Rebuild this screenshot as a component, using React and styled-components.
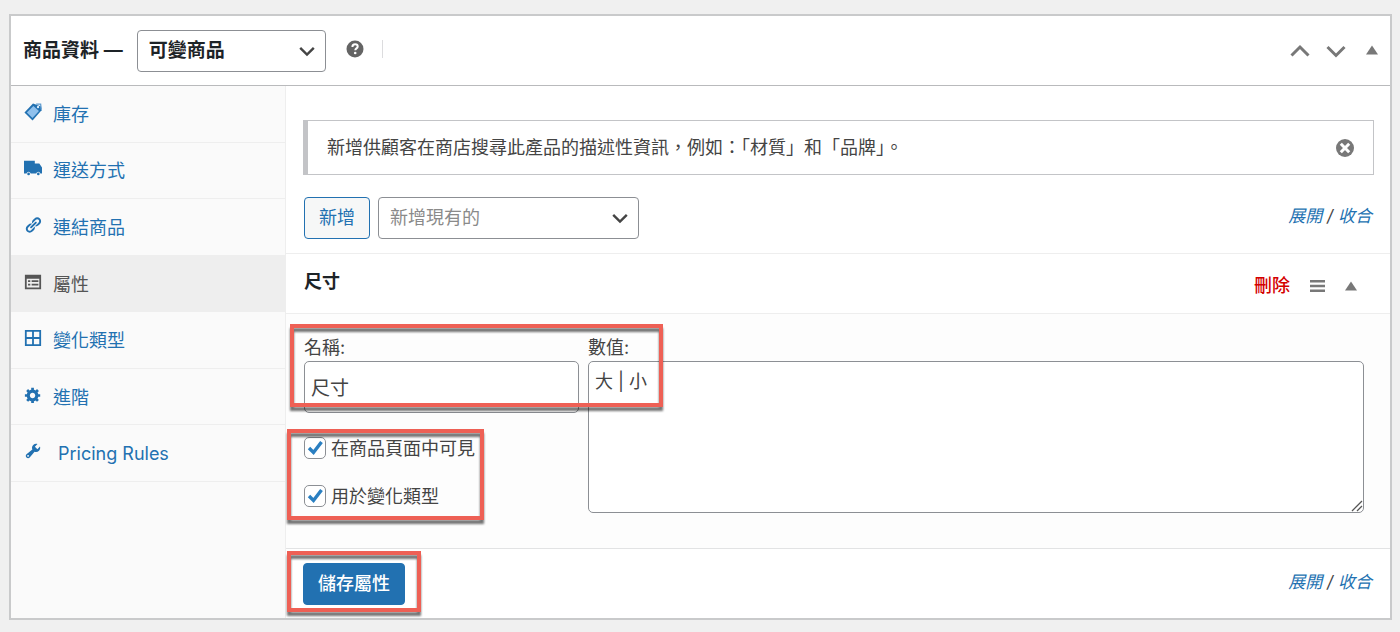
import React from "react";
import styled, { createGlobalStyle } from "styled-components";

const tabs = [
    { id: "inventory", label: "庫存" },
    { id: "shipping", label: "運送方式" },
    { id: "linked", label: "連結商品" },
    { id: "attributes", label: "屬性" },
    { id: "variations", label: "變化類型" },
    { id: "advanced", label: "進階" },
    { id: "pricing", label: "Pricing Rules", indent: true },
];

const TabIcon = ({ id }) => (
    <svg width="18" height="18" viewBox="0 0 20 20" fill="currentColor" aria-hidden="true">
        {id === "inventory" && <>
            <path d="M0.5 10.5 10 0.5 19 4 19.5 8 9.5 19.5z" />
            <path d="M3.2 10.6 10.4 3.2l6.2 5.6L9.4 16.6z" fill="#8fc0ec" />
            <path d="M13.5 1.2h5l.6 6" fill="none" stroke="#5d9bd0" strokeWidth="1.4" />
            <circle cx="15.6" cy="4.4" r="1.3" fill="#d8eafa" />
        </>}
        {id === "shipping" && <>
            <path d="M0 2h12v3h5l3 4.5V16h-1.8a2.4 2.4 0 0 0-4.6 0H7.4a2.4 2.4 0 0 0-4.6 0H0z" />
            <circle cx="5.1" cy="16.6" r="1.5" />
            <circle cx="15.9" cy="16.6" r="1.5" />
        </>}
        {id === "linked" &&
            <path d="M17.74 2.76c1.68 1.69 1.68 4.41 0 6.1l-1.53 1.52c-1.12 1.12-2.7 1.47-4.14 1.09l2.62-2.61.76-.77.76-.76c.84-.84.84-2.2 0-3.04-.84-.85-2.2-.85-3.04 0l-.77.76-3.38 3.38c-.37-1.44-.02-3.02 1.1-4.14l1.52-1.53c1.69-1.68 4.42-1.68 6.1 0zM8.59 13.43l5.34-5.34c.42-.42.42-1.1 0-1.52-.44-.43-1.13-.39-1.53 0l-5.33 5.34c-.42.42-.42 1.1 0 1.52.44.43 1.13.39 1.52 0zm-.76 2.29l4.14-4.15c.38 1.44.03 3.02-1.09 4.14l-1.52 1.53c-1.69 1.68-4.41 1.68-6.1 0-1.68-1.68-1.68-4.42 0-6.1l1.53-1.52c1.12-1.12 2.7-1.47 4.14-1.1l-4.14 4.15c-.85.84-.85 2.2 0 3.05.84.84 2.2.84 3.04 0z" />
        }
        {id === "attributes" &&
            <path fillRule="evenodd" d="M1 2h18v16H1zM3 6.5v9.5h14V6.5zM4.5 8h2.5v2H4.5zM8.5 8H16v2H8.5zM4.5 12h2.5v2H4.5zM8.5 12H16v2H8.5z" />
        }
        {id === "variations" &&
            <path fillRule="evenodd" d="M1 1h18v18H1zM3 3v6h6V3zM11 3v6h6V3zM3 11v6h6v-6zM11 11v6h6v-6z" />
        }
        {id === "advanced" &&
            <path d="M18 12h-2.18c-.17.7-.44 1.35-.81 1.93l1.54 1.54-2.1 2.1-1.54-1.54c-.58.36-1.23.63-1.91.79V19H8v-2.18c-.68-.16-1.33-.43-1.91-.79l-1.54 1.54-2.12-2.12 1.54-1.54c-.36-.58-.63-1.23-.79-1.91H1V9.03h2.17c.16-.7.44-1.35.8-1.94L2.43 5.55l2.1-2.1 1.54 1.54c.58-.37 1.24-.64 1.93-.81V2h3v2.18c.68.16 1.33.43 1.91.79l1.54-1.54 2.12 2.12-1.54 1.54c.36.59.64 1.24.8 1.94H18V12zm-8.5 1.5c1.66 0 3-1.34 3-3s-1.34-3-3-3-3 1.34-3 3 1.34 3 3 3z" />
        }
        {id === "pricing" &&
            <path d="M16.68 9.77c-1.34 1.34-3.3 1.67-4.95.99l-5.41 6.52c-.99.99-2.59.99-3.58 0s-.99-2.59 0-3.57l6.52-5.42c-.68-1.65-.35-3.61.99-4.95 1.28-1.28 3.12-1.62 4.72-1.06l-2.89 2.89 2.82 2.82 2.86-2.87c.53 1.58.18 3.39-1.08 4.65zM3.81 16.21c.4.39 1.04.39 1.43 0 .4-.4.4-1.04 0-1.43-.39-.4-1.03-.4-1.43 0-.39.39-.39 1.03 0 1.43z" />
        }
    </svg>
);

const Chevron = ({ up, size = 20, weight = 3 }) => (
    <svg width={size} height={size} viewBox="0 0 20 20" fill="none" stroke="currentColor" strokeWidth={weight} aria-hidden="true">
        <path d={up ? "M1.5 14.5 10 6l8.5 8.5" : "M1.5 6 10 14.5 18.5 6"} />
    </svg>
);

const Triangle = () => (
    <svg width="12" height="10" viewBox="0 0 12 10" fill="currentColor" aria-hidden="true">
        <path d="M6 0.5 12 9.5H0z" />
    </svg>
);

const Select = ({ label, options, $width, $title, $muted }) => (
    <SelectWrap $width={$width}>
        <SelectBox aria-label={label} $title={$title} $muted={$muted}>
            {options.map(o => <option key={o}>{o}</option>)}
        </SelectBox>
        <Chevron size={16} />
    </SelectWrap>
);

const Toggles = () => (
    <ToggleLinks>
        <a href="#expand">展開</a> / <a href="#close">收合</a>
    </ToggleLinks>
);

const Check = ({ id, label }) => (
    <CheckRow>
        <CheckMark>
            <input type="checkbox" id={id} defaultChecked />
            <svg width="20" height="20" viewBox="0 0 20 20" fill="none" stroke="#2a7fc1" strokeWidth="3.4" aria-hidden="true">
                <path d="M4 10 8.5 14.5 16.5 4" />
            </svg>
        </CheckMark>
        <label htmlFor={id}>{label}</label>
    </CheckRow>
);

const App = () => {
    return <>
        <GlobalStyle />
        <Page lang="zh-TW">
            <Panel>
                <PanelHeader>
                    <h2>商品資料 —</h2>
                    <Select label="商品類型" options={["可變商品"]} $width={189} $title />
                    <HelpTip>
                        <svg width="18" height="18" viewBox="0 0 18 18" aria-label="說明">
                            <circle cx="9" cy="9" r="8.5" fill="#646464" />
                            <path d="M6.4 6.9C6.4 5.2 7.5 4.3 9.1 4.3s2.6.9 2.6 2.2c0 1.9-2.4 1.9-2.4 3.8" fill="none" stroke="#fff" strokeWidth="2" />
                            <circle cx="9.2" cy="13" r="1.3" fill="#fff" />
                        </svg>
                    </HelpTip>
                    <HandleActions>
                        <IconButton aria-label="上移"><Chevron up /></IconButton>
                        <IconButton aria-label="下移"><Chevron /></IconButton>
                        <ToggleButton aria-label="切換面板"><Triangle /></ToggleButton>
                    </HandleActions>
                </PanelHeader>

                <PanelBody>
                    <Sidebar>
                        <ul>
                            {tabs.map(tab => (
                                <TabItem key={tab.id} $active={tab.id === "attributes"} $indent={tab.indent}>
                                    <a href={`#${tab.id}`}>
                                        <TabIcon id={tab.id} />
                                        <span>{tab.label}</span>
                                    </a>
                                </TabItem>
                            ))}
                        </ul>
                    </Sidebar>

                    <Content>
                        <Notice>
                            <p>新增供顧客在商店搜尋此產品的描述性資訊，例如：「材質」和「品牌」。</p>
                            <IconButton aria-label="關閉">
                                <svg width="18" height="18" viewBox="0 0 18 18">
                                    <circle cx="9" cy="9" r="9" fill="#787878" />
                                    <path d="M4.8 4.8l8.4 8.4M13.2 4.8l-8.4 8.4" stroke="#fff" strokeWidth="3" />
                                </svg>
                            </IconButton>
                        </Notice>

                        <Toolbar>
                            <Button>新增</Button>
                            <Select label="新增現有的屬性" options={["新增現有的"]} $width={261} $muted />
                            <Toggles />
                        </Toolbar>

                        <AttributeHeader>
                            <h3>尺寸</h3>
                            <DeleteLink href="#delete">刪除</DeleteLink>
                            <svg width="15" height="12" viewBox="0 0 15 12" fill="#787878" aria-hidden="true">
                                <path d="M0 0h15v2.4H0zM0 4.8h15v2.4H0zM0 9.6h15V12H0z" />
                            </svg>
                            <IconButton aria-label="收合屬性"><Triangle /></IconButton>
                        </AttributeHeader>

                        <AttributeForm>
                            <FieldHighlight />
                            <div>
                                <Field>
                                    <label htmlFor="attribute-name">名稱:</label>
                                    <input id="attribute-name" type="text" defaultValue="尺寸" />
                                </Field>
                                <CheckGroup>
                                    <Check id="attribute-visible" label="在商品頁面中可見" />
                                    <Check id="attribute-variation" label="用於變化類型" />
                                    <CheckHighlight />
                                </CheckGroup>
                            </div>
                            <Field>
                                <label htmlFor="attribute-values">數值:</label>
                                <TextAreaWrap>
                                    <textarea id="attribute-values" defaultValue="大 | 小" />
                                    <svg width="12" height="12" viewBox="0 0 12 12" stroke="#555" strokeWidth="1.3" aria-hidden="true">
                                        <path d="M1 11 11 1M6 11l5-5" />
                                    </svg>
                                </TextAreaWrap>
                            </Field>
                        </AttributeForm>

                        <Footer>
                            <SaveWrap>
                                <Button $primary>儲存屬性</Button>
                                <SaveHighlight />
                            </SaveWrap>
                            <Toggles />
                        </Footer>
                    </Content>
                </PanelBody>
            </Panel>
        </Page>
    </>
};

const GlobalStyle = createGlobalStyle`
    *, *::before, *::after {
        box-sizing: border-box;
    }
    body {
        margin: 0;
        background: #f0f0f0;
        color: #444;
        font-family: Inter, "Noto Sans CJK TC", sans-serif;
        font-size: 18px;
        line-height: 26px;
    }
    h2, h3, p, ul {
        margin: 0;
        padding: 0;
    }
    button, input, select, textarea {
        font: inherit;
        color: inherit;
    }
    svg {
        display: block;
        flex: none;
    }
`

const Page = styled.div`
    padding: 14px 8px 12px 9px;
`

const Panel = styled.section`
    background: #fff;
    border: 2px solid #c9cacb;
`

const PanelHeader = styled.header`
    display: flex;
    align-items: center;
    height: 70px;
    padding: 0 12px;
    border-bottom: 1px solid #b9babc;

    h2 {
        margin-right: 14px;
        color: #1d2327;
        font-size: 19px;
        font-weight: 600;
    }
`

const SelectWrap = styled.div`
    position: relative;
    width: ${props => props.$width}px;
    height: 42px;

    svg {
        position: absolute;
        top: 13px;
        right: 11px;
        color: #444;
        pointer-events: none;
    }
`

const SelectBox = styled.select`
    appearance: none;
    width: 100%;
    height: 100%;
    padding: 0 30px 0 11px;
    border: 1px solid #8c8f94;
    border-radius: 4px;
    background: #fff;
    color: ${props => props.$muted ? "#8a8a8a" : "#1d2327"};
    font-size: ${props => props.$title ? 19 : 18}px;
    font-weight: ${props => props.$title ? 600 : 400};
`

const HelpTip = styled.span`
    margin: 0 0 3px 20px;
    padding-right: 18px;
    border-right: 1px solid #dcdcde;
`

const HandleActions = styled.div`
    display: flex;
    align-items: center;
    gap: 16px;
    margin-left: auto;
`

const IconButton = styled.button`
    display: flex;
    padding: 0;
    border: 0;
    background: none;
    color: #787878;
    cursor: pointer;
`

const ToggleButton = styled(IconButton)`
    padding: 0 0 2px 4px;
`

const PanelBody = styled.div`
    display: flex;
`

const Sidebar = styled.nav`
    flex: none;
    width: 275px;
    background: #fafafa;
    border-right: 1px solid #eee;

    ul {
        display: flex;
        flex-direction: column;
        height: 396px;
        list-style: none;
    }
`

const TabItem = styled.li`
    flex: 1;
    border-bottom: 1px solid #eee;
    background: ${props => props.$active ? "#eee" : "transparent"};

    a {
        display: flex;
        align-items: center;
        gap: ${props => props.$indent ? 16 : 11}px;
        height: 100%;
        padding: 2px 13px 0;
        color: ${props => props.$active ? "#555" : "#2271b1"};
        text-decoration: none;
    }
    svg {
        margin-bottom: 6px;
    }
`

const Content = styled.main`
    flex: 1;
    min-width: 0;
    padding-top: 34px;
`

const Notice = styled.div`
    display: flex;
    align-items: center;
    justify-content: space-between;
    height: 55px;
    margin: 0 16px 22px 17px;
    padding: 0 19px;
    border: 1px solid #c3c4c7;
    border-left-width: 5px;
`

const Toolbar = styled.div`
    display: flex;
    align-items: center;
    gap: 8px;
    padding: 0 18px 14px;
`

const Button = styled.button`
    height: 42px;
    padding: 0 14px;
    border: 1px solid #2271b1;
    border-radius: 4px;
    background: ${props => props.$primary ? "#2271b1" : "#f6f7f7"};
    color: ${props => props.$primary ? "#fff" : "#2271b1"};
    font-weight: ${props => props.$primary ? 500 : 400};
    cursor: pointer;
`

const ToggleLinks = styled.span`
    margin-left: auto;
    padding-bottom: 4px;
    font-size: 17px;
    font-style: italic;

    a {
        color: #2271b1;
        text-decoration: none;
    }
`

const AttributeHeader = styled.div`
    display: flex;
    align-items: center;
    height: 60px;
    padding: 4px 33px 0 18px;
    border-top: 1px solid #eee;

    h3 {
        flex: 1;
        padding-bottom: 8px;
        color: #1d2327;
        font-size: 18px;
        font-weight: 600;
    }
    svg {
        margin-left: 20px;
    }
`

const DeleteLink = styled.a`
    color: #d40000;
    font-weight: 500;
    text-decoration: none;
`

const AttributeForm = styled.div`
    position: relative;
    display: grid;
    grid-template-columns: 275px 1fr;
    gap: 9px;
    padding: 21px 26px 35px 18px;
    border-top: 1px solid #eee;
    background: #fdfdfd;
`

const Field = styled.div`
    label {
        display: block;
    }
    input, textarea {
        display: block;
        width: 100%;
        height: 52px;
        padding: 0 6px 2px;
        border: 1px solid #8c8f94;
        border-radius: 5px;
        background: #fff;
        font-size: 19px;
    }
    textarea {
        height: 152px;
        padding: 7px 6px;
        font-size: 18px;
        resize: none;
    }
`

const TextAreaWrap = styled.div`
    position: relative;

    svg {
        position: absolute;
        right: 1px;
        bottom: 1px;
    }
`

const CheckGroup = styled.div`
    position: relative;
    display: flex;
    flex-direction: column;
    gap: 20px;
    width: fit-content;
    margin-top: 21px;
`

const CheckRow = styled.div`
    display: flex;
    align-items: center;
    gap: 5px;

    label {
        padding-top: 2px;
    }
`

const CheckMark = styled.span`
    position: relative;

    input {
        display: block;
        appearance: none;
        width: 22px;
        height: 22px;
        margin: 0;
        border: 1px solid #8c8f94;
        border-radius: 5px;
        background: #fff;
    }
    svg {
        position: absolute;
        top: 1px;
        left: 1px;
        pointer-events: none;
    }
    input:not(:checked) + svg {
        display: none;
    }
`

const Footer = styled.footer`
    display: flex;
    align-items: center;
    padding: 14px 18px 13px 17px;
    border-top: 1px solid #e2e3e4;
`

const SaveWrap = styled.div`
    position: relative;
`

// red frames drawn over the fields
const Highlight = styled.div`
    position: absolute;
    border: 4px solid #ee6055;
    filter: drop-shadow(0 4px 1px rgba(0, 0, 0, 0.55));
    pointer-events: none;
    z-index: 1;
`

const FieldHighlight = styled(Highlight)`
    top: 10px;
    left: 4px;
    width: 373px;
    height: 83px;
`

const CheckHighlight = styled(Highlight)`
    inset: -5px -9px -10px -17px;
`

const SaveHighlight = styled(Highlight)`
    inset: -12px -16px -7px;
`

export default App;
